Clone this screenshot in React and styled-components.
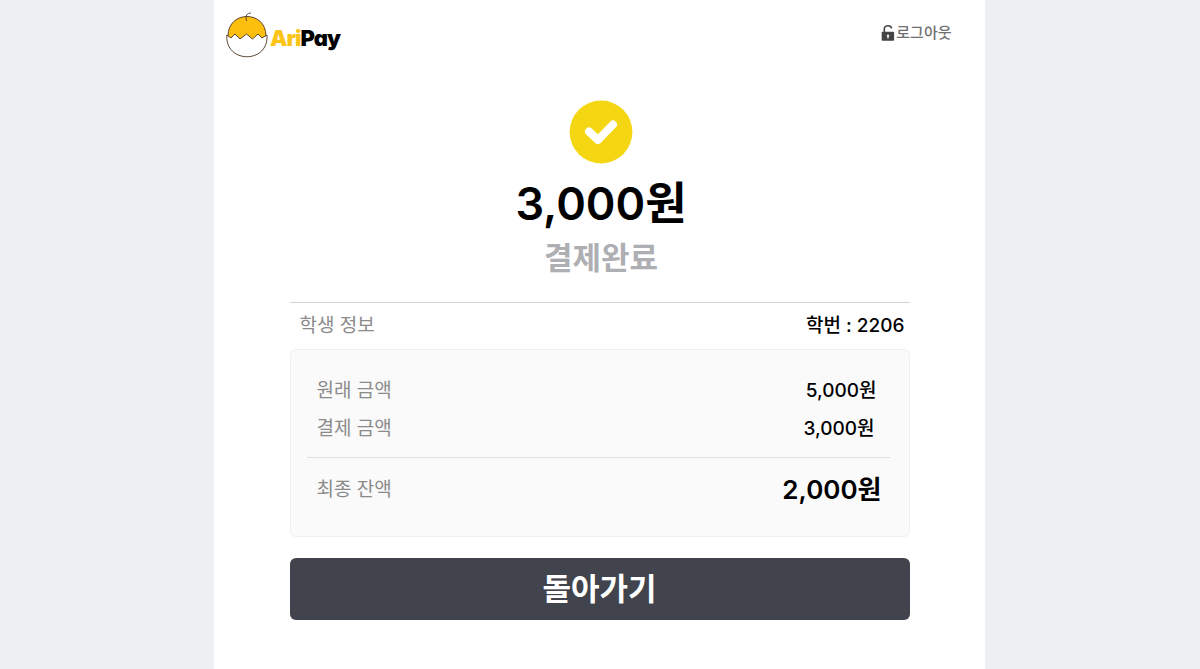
import React from 'react';
import styled, { createGlobalStyle } from 'styled-components';

const GlobalStyle = createGlobalStyle`
  * { box-sizing: border-box; }
  body {
    margin: 0;
    background: #eeeff1;
    font-family: Inter, 'Noto Sans CJK KR', sans-serif;
    color: #000;
  }
`;

const Page = styled.div`
  height: 669px;
  overflow: hidden;
  padding-left: 213.5px;
`;

const Panel = styled.main`
  width: 771px;
  height: 100%;
  background: #fff;
`;

const Header = styled.header`
  display: flex;
  justify-content: space-between;
  align-items: flex-start;
  height: 100px;
  padding: 8px 33px 0 8.5px;
`;

const Logout = styled.a`
  display: flex;
  align-items: center;
  gap: 1px;
  height: 20px;
  margin-top: 15px;
  font-size: 15px;
  font-weight: 500;
  line-height: 20px;
  color: #707070;
  white-space: nowrap;
`;

const Content = styled.section`
  width: 620px;
  margin-left: 76px;
  display: flex;
  flex-direction: column;
`;

const Summary = styled.div`
  display: flex;
  flex-direction: column;
  align-items: center;
  height: 203px;
  border-bottom: 1.5px solid #d6d6d6;
  padding-left: 3px;
`;

const Amount = styled.h1`
  margin: 10px 0 0;
  font-size: 45px;
  font-weight: 600;
  line-height: 60px;
`;

const Status = styled.p`
  margin: 3px 0 0;
  font-size: 31px;
  font-weight: 700;
  line-height: 42px;
  color: #aeafb3;
`;

const Row = styled.div`
  display: flex;
  justify-content: space-between;
  align-items: center;
  height: ${(p) => p.$height}px;
  padding: 0 ${(p) => p.$right}px 0 ${(p) => p.$left}px;
`;

const Label = styled.span`
  font-size: 19px;
  line-height: 28px;
  font-weight: 400;
  color: #8b8b8b;
`;

const Value = styled.span`
  font-size: ${(p) => (p.$total ? 26 : 19)}px;
  font-weight: ${(p) => (p.$total ? 600 : 500)};
  line-height: 30px;
`;

const Card = styled.div`
  height: 188px;
  padding: 22px 19px 0 16px;
  border: 1.5px solid #efefef;
  border-radius: 6px;
  background: #fafafa;
`;

const Rule = styled.hr`
  height: 1px;
  margin: 9px 0 12px;
  border: 0;
  background: #dfdfdf;
`;

const BackButton = styled.button`
  height: 62px;
  margin-top: 21px;
  padding: 0;
  border: 0;
  border-radius: 6px;
  background: #41444d;
  color: #fff;
  font: 700 31px/62px Inter, 'Noto Sans CJK KR', sans-serif;
`;

const Logo = () => (
  <svg width="124" height="54" viewBox="0 0 124 54">
    <path d="M6 28 C6 2 44 2 44 28 L44 34 L6 34Z" fill="#fdbf0d" stroke="#5a4632" strokeWidth="1" />
    <path
      d="M4.8 27 L9 30 L13 26 L18 31 L24.5 26 L30.5 31 L36 26 L40 30 L45 27 C47 56 3 56 4.8 27Z"
      fill="#fff"
      stroke="#5a4632"
      strokeWidth="1"
    />
    <path d="M24.5 13 C23 8 25 5 29 5" fill="none" stroke="#5a4632" strokeWidth="1" />
    <text x="48" y="38" fontFamily="Inter" fontWeight="900" fontSize="22" textLength="71" style={{ fontFeatureSettings: '"cv11"' }}>
      <tspan fill="#fcc419">Ari</tspan>
      <tspan fill="#000">Pay</tspan>
    </text>
  </svg>
);

const LockIcon = () => (
  <svg width="14" height="18" viewBox="0 0 14 18">
    <rect x="0.7" y="7.7" width="12.4" height="9" rx="0.8" fill="#444" />
    <path d="M3.3 8 V5.2 C3.3 .8 9.8 .6 10.6 4.4" fill="none" stroke="#444" strokeWidth="1.6" />
    <path d="M5.9 10.7h2.2v1.8h-.5v2h-1.2v-2h-.5z" fill="#fff" />
  </svg>
);

const CheckIcon = () => (
  <svg width="64" height="64" viewBox="0 0 64 64">
    <circle cx="32" cy="32" r="31.4" fill="#f4d613" />
    <path d="M20 31.5 L29 40 L44 24.5" fill="none" stroke="#fff" strokeWidth="8" strokeLinecap="round" strokeLinejoin="round" />
  </svg>
);

export default function App() {
  return (
    <Page>
      <GlobalStyle />
      <Panel>
        <Header>
          <Logo />
          <Logout>
            <LockIcon />
            로그아웃
          </Logout>
        </Header>
        <Content>
          <Summary>
            <CheckIcon />
            <Amount>3,000원</Amount>
            <Status>결제완료</Status>
          </Summary>
          <Row $height={46} $left={10} $right={5}>
            <Label>학생 정보</Label>
            <Value>학번 : 2206</Value>
          </Row>
          <Card>
            <Row $height={38} $left={10} $right={13}>
              <Label>원래 금액</Label>
              <Value>5,000원</Value>
            </Row>
            <Row $height={38} $left={10} $right={15}>
              <Label>결제 금액</Label>
              <Value>3,000원</Value>
            </Row>
            <Rule />
            <Row $height={40} $left={10} $right={8}>
              <Label>최종 잔액</Label>
              <Value $total>2,000원</Value>
            </Row>
          </Card>
          <BackButton type="button">돌아가기</BackButton>
        </Content>
      </Panel>
    </Page>
  );
}
